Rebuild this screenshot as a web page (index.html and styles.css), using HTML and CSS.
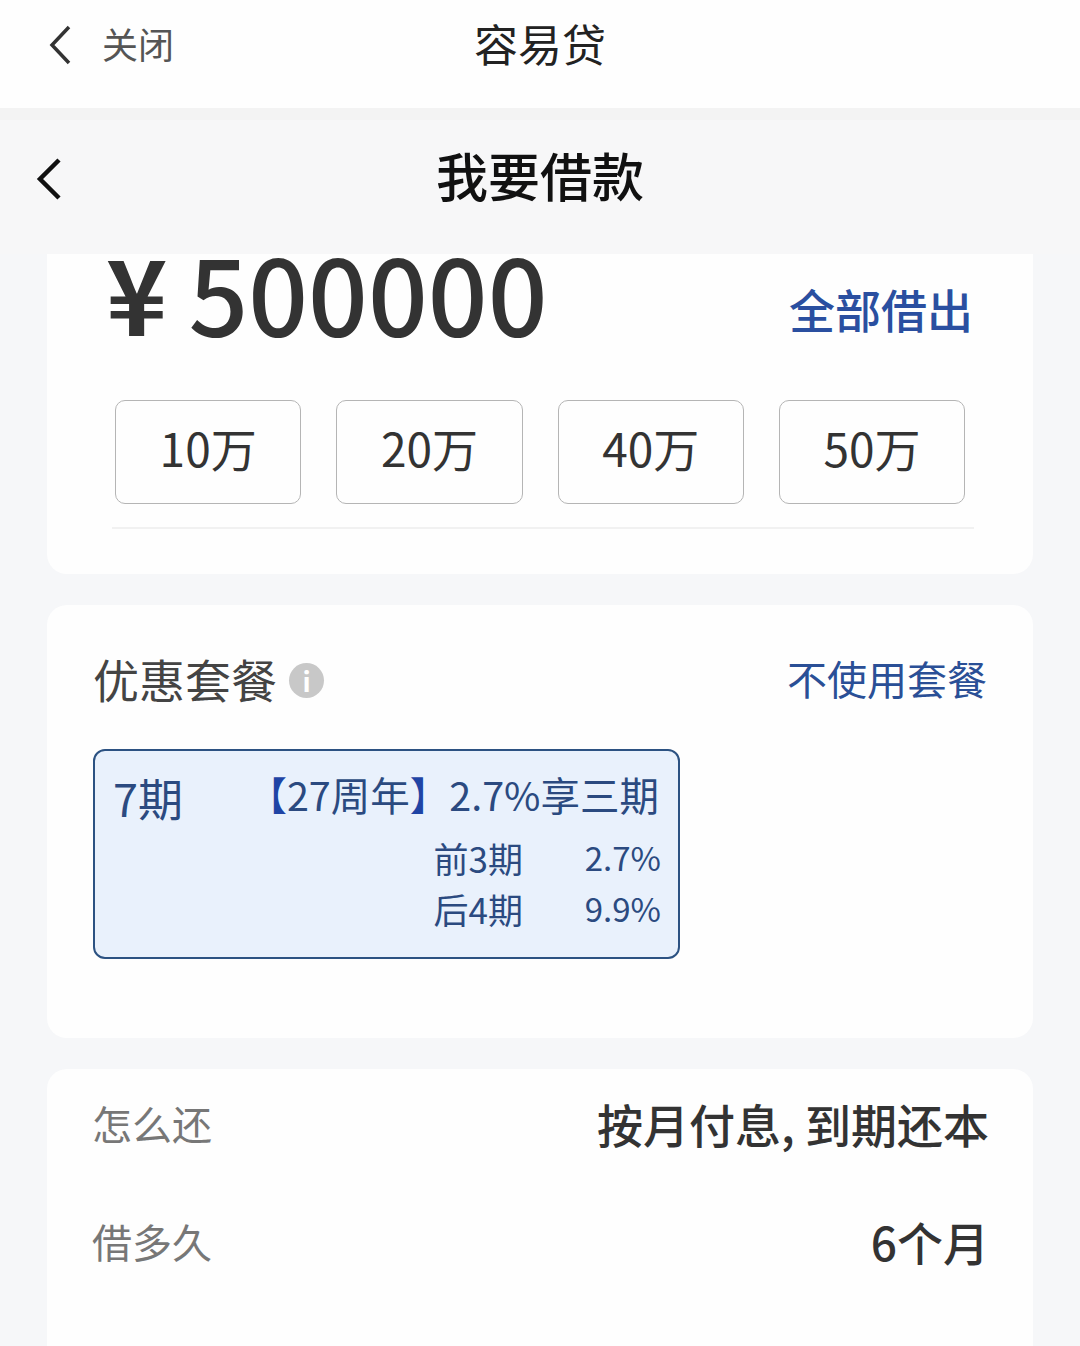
FILE: index.html
```html
<!DOCTYPE html>
<html lang="zh-CN">
<head>
    <meta charset="UTF-8">
    <title>容易贷</title>
    <link rel="stylesheet" href="styles.css">
</head>
<body>
    <header class="top-bar">
        <div class="top-left">
            <svg class="back-top" viewBox="0 0 24 40"><path d="M21 2 L4 20 L21 38"/></svg>
            <span class="close-text">关闭</span>
        </div>
        <div class="top-title">容易贷</div>
    </header>

    <nav class="sub-bar">
        <svg class="back-sub" viewBox="0 0 26 44"><path d="M23 3 L4 22 L23 41"/></svg>
        <h1 class="sub-title">我要借款</h1>
    </nav>

    <main class="content">
        <section class="card card-amount">
            <div class="amount-row">
                <div class="amount"><span class="yen">¥</span><span>500000</span></div>
                <a class="borrow-all">全部借出</a>
            </div>
            <div class="quick-list">
                <button class="quick">10万</button>
                <button class="quick">20万</button>
                <button class="quick">40万</button>
                <button class="quick">50万</button>
            </div>
            <div class="divider"></div>
        </section>

        <section class="card card-plan">
            <div class="plan-head">
                <div class="plan-title">优惠套餐<span class="info">i</span></div>
                <a class="no-plan">不使用套餐</a>
            </div>
            <div class="plan-box">
                <div class="plan-term">7期</div>
                <div class="plan-detail">
                    <div class="plan-name"><span class="bracket">【</span>27周年<span class="bracket">】</span>2.7%享三期</div>
                    <div class="plan-line"><span>前3期</span><span class="rate">2.7%</span></div>
                    <div class="plan-line"><span>后4期</span><span class="rate">9.9%</span></div>
                </div>
            </div>
        </section>

        <section class="card card-info">
            <div class="info-row">
                <span class="info-label">怎么还</span>
                <span class="info-value">按月付息, 到期还本</span>
            </div>
            <div class="info-row">
                <span class="info-label">借多久</span>
                <span class="info-value">6个月</span>
            </div>
        </section>
    </main>
</body>
</html>
```

FILE: styles.css
```css
html, body {
    margin: 0;
    padding: 0;
}
body {
    width: 1080px;
    height: 1346px;
    overflow: hidden;
    background-color: #f6f7f9;
    font-family: "Noto Sans CJK SC", "Noto Sans", sans-serif;
    color: #333;
}
.top-bar {
    height: 108px;
    background-color: #fefefe;
    display: flex;
    align-items: center;
    justify-content: center;
    position: relative;
    border-bottom: 12px solid #f3f3f3;
}
.top-left {
    position: absolute;
    left: 48px;
    top: 24px;
    display: flex;
    align-items: center;
    gap: 30px;
}
.back-top {
    width: 24px;
    height: 40px;
}
.back-top path, .back-sub path {
    fill: none;
    stroke-width: 3.5;
}
.back-top path {
    stroke: #333;
}
.close-text {
    font-size: 36px;
    line-height: 44px;
    margin-top: -3px;
    color: #555;
}
.top-title {
    font-size: 44px;
    color: #222;
    line-height: 60px;
    margin-top: -22px;
}
.sub-bar {
    height: 134px;
    background-color: #f7f7f8;
    display: flex;
    align-items: center;
    justify-content: center;
    position: relative;
}
.back-sub {
    position: absolute;
    left: 36px;
    top: 37px;
    width: 26px;
    height: 44px;
}
.back-sub path {
    stroke: #111;
    stroke-width: 4.5;
}
.sub-title {
    margin: 0 0 24px;
    font-size: 52px;
    font-weight: 500;
    color: #111;
    line-height: 70px;
}
.content {
    padding: 0 47px;
}
.card {
    background-color: #fefefe;
    border-radius: 0 0 20px 20px;
    margin-bottom: 31px;
}
.card-amount {
    height: 320px;
    padding: 0 59px 0 61px;
    box-sizing: border-box;
}
.amount-row {
    display: flex;
    justify-content: space-between;
    height: 146px;
}
.amount {
    font-size: 105px;
    line-height: 86px;
    margin-top: -6px;
    margin-left: -2px;
    color: #333;
    font-weight: 500;
    display: flex;
    gap: 21px;
}
.yen {
    font-size: 104px;
    font-weight: 700;
}
.borrow-all {
    font-size: 46px;
    font-weight: 500;
    color: #2a4fa0;
    line-height: 60px;
    margin-top: 24px;
    margin-right: 1px;
}
.quick-list {
    display: flex;
    gap: 35px;
    padding-left: 7px;
}
.quick {
    width: 186.3px;
    height: 104px;
    padding: 0 0 11px;
    border: 1px solid #b5b5b5;
    border-radius: 10px;
    background-color: #fefefe;
    font-family: inherit;
    font-size: 46px;
    color: #333;
}
.divider {
    height: 2px;
    background-color: #f1f1f1;
    margin-top: 23px;
    margin-left: 4px;
}
.card-plan {
    height: 433px;
    border-radius: 20px;
    padding: 40px 46px 0;
    box-sizing: border-box;
}
.plan-head {
    display: flex;
    justify-content: space-between;
    align-items: center;
    height: 66px;
    margin-bottom: 38px;
}
.plan-title {
    font-size: 46px;
    color: #444;
    display: flex;
    align-items: center;
    gap: 12px;
}
.info {
    width: 35px;
    height: 35px;
    margin-top: 4px;
    border-radius: 50%;
    background-color: #c8c8c8;
    color: #fff;
    font-size: 27px;
    font-weight: 700;
    line-height: 35px;
    text-align: center;
}
.no-plan {
    font-size: 40px;
    color: #2a4f96;
}
.plan-box {
    width: 587px;
    height: 210px;
    box-sizing: border-box;
    border: 2px solid #2c5282;
    border-radius: 12px;
    background-color: #e9f1fc;
    color: #2b4a80;
    display: flex;
    justify-content: space-between;
    padding: 15px 17px 0 18px;
}
.plan-term {
    font-size: 45px;
    line-height: 64px;
}
.plan-detail {
    width: 396px;
}
.plan-name {
    font-size: 39.5px;
    line-height: 56px;
    white-space: nowrap;
    display: flex;
    justify-content: flex-end;
    margin-right: 2px;
}
.bracket {
    color: #1f44a5;
}
.plan-line {
    font-size: 35px;
    line-height: 51px;
    display: flex;
    justify-content: flex-end;
}
.plan-name + .plan-line {
    margin-top: 10px;
}
.rate {
    width: 138px;
    font-size: 33px;
    text-align: right;
}
.card-info {
    height: 300px;
    border-radius: 20px 20px 0 0;
    padding: 24px 44px 0 45px;
    box-sizing: border-box;
}
.info-row {
    display: flex;
    justify-content: space-between;
    align-items: center;
    height: 60px;
    margin-bottom: 58px;
}
.info-label {
    font-size: 40px;
    color: #777;
}
.info-value {
    font-size: 46px;
    font-weight: 500;
    color: #333;
}
```
